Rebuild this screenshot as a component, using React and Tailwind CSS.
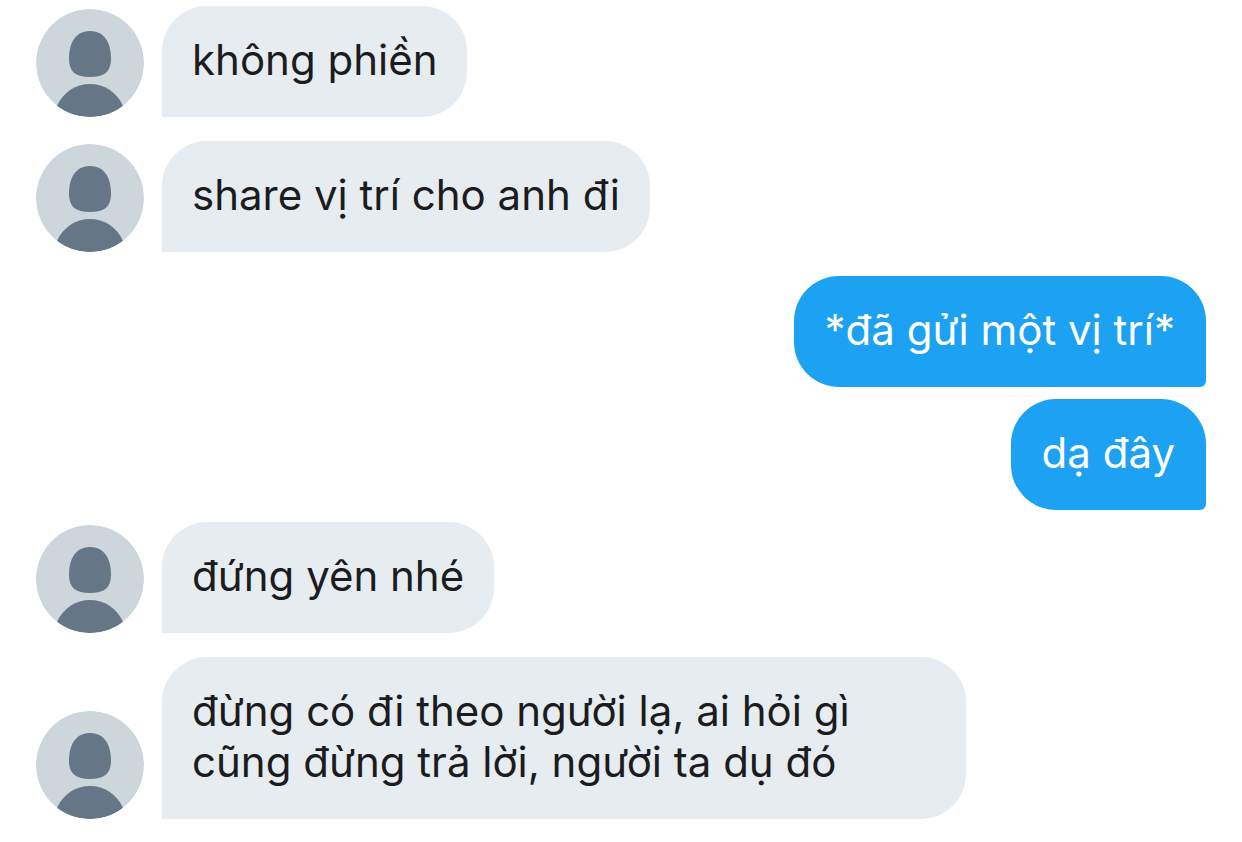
const messages = [
  { id: 1, text: "không phiền", mine: false },
  { id: 2, text: "share vị trí cho anh đi", mine: false },
  { id: 3, text: "*đã gửi một vị trí*", mine: true },
  { id: 4, text: "dạ đây", mine: true },
  { id: 5, text: "đứng yên nhé", mine: false },
  {
    id: 6,
    text: "đừng có đi theo người lạ, ai hỏi gì cũng đừng trả lời, người ta dụ đó",
    mine: false,
  },
];

const Avatar = () => (
  <svg viewBox="0 0 108 108" className="size-27 shrink-0 rounded-full" aria-hidden="true">
    <circle cx="54" cy="54" r="54" fill="#ccd6db" />
    <path
      d="M54 22C68 22 75 33 75 50C75 63 68 68 54 68C40 68 33 63 33 50C33 33 40 22 54 22Z"
      fill="#657786"
    />
    <path
      d="M21 97C27 83 40 75 54 75C68 75 81 83 87 97C78 104 67 108 54 108C41 108 30 104 21 97Z"
      fill="#657786"
    />
  </svg>
);

const Message = ({ text, mine }) => {
  if (mine) {
    return (
      <li className="flex justify-end pb-3">
        <p className="max-w-[804px] rounded-[45px] rounded-br-[6px] bg-[#1da1f2] px-[31px] pt-7 pb-8 text-white">
          {text}
        </p>
      </li>
    );
  }
  return (
    <li className="flex items-end gap-[18px] pb-6">
      <Avatar />
      <p className="max-w-[804px] rounded-[45px] rounded-bl-none bg-[#e6ecf0] px-[30px] pt-7 pb-8 text-[#1c1c20]">
        {text}
      </p>
    </li>
  );
};

const App = () => {
  return (
    <main className="min-h-screen bg-white px-9 pt-1.5 font-[Inter,sans-serif] text-[42px] leading-[51px]">
      <ul className="flex flex-col">
        {messages.map((message) => (
          <Message key={message.id} text={message.text} mine={message.mine} />
        ))}
      </ul>
    </main>
  );
};

export default App;
